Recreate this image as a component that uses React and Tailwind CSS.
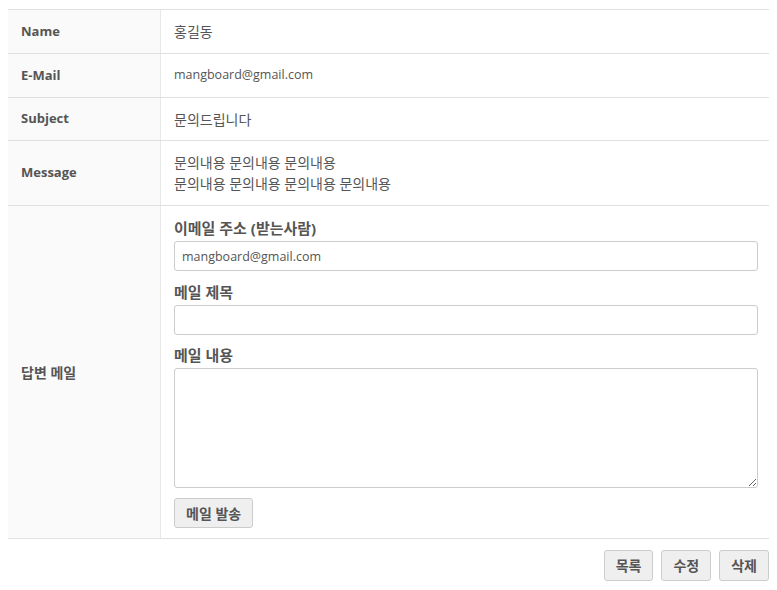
export default function App() {
  const font = { fontFamily: '"Open Sans", "Noto Sans CJK KR", sans-serif' };
  const rows = [
    ['Name', '홍길동', 'h-[44px]', 'text-[14px]'],
    ['E-Mail', 'mangboard@gmail.com', 'h-[44px]', 'text-[12.5px]'],
    ['Subject', '문의드립니다', 'h-[43px]', 'text-[14px]'],
  ];
  return (
    <div className="bg-white px-2 pt-[9px] text-[13px] text-[#555]" style={font}>
      <div className="border-t border-[#e0e0e0]">
        {rows.map(([k, v, h, size]) => (
          <div key={k} className={`flex ${h} border-b border-[#e0e0e0]`}>
            <div className="w-[153px] shrink-0 bg-[#fafafa] border-r border-[#e8e8e8] px-[13px] flex items-center font-bold">{k}</div>
            <div className={`flex-1 px-[13px] flex items-center ${size}`}>{v}</div>
          </div>
        ))}
        <div className="flex h-[65px] border-b border-[#e0e0e0]">
          <div className="w-[153px] shrink-0 bg-[#fafafa] border-r border-[#e8e8e8] px-[13px] flex items-center font-bold">Message</div>
          <div className="flex-1 px-[13px] flex flex-col justify-center leading-[21px] text-[14px]">
            <div>문의내용 문의내용 문의내용</div>
            <div>문의내용 문의내용 문의내용 문의내용</div>
          </div>
        </div>
        <div className="flex border-b border-[#e0e0e0]">
          <div className="w-[153px] shrink-0 bg-[#fafafa] border-r border-[#e8e8e8] px-[13px] flex items-center font-bold text-[14px]">답변 메일</div>
          <div className="flex-1 pl-[13px] pr-[11px] pt-[11px] pb-[10px]">
            <div className="font-bold text-[15px] h-[22px] leading-[22px] mb-[2px] flex items-center">이메일 주소 (받는사람)</div>
            <input
              defaultValue="mangboard@gmail.com"
              className="block w-full h-[30px] border border-[#ccc] rounded-[3px] px-[7px] text-[12.5px] text-[#555] outline-none"
              style={font}
            />
            <div className="font-bold text-[15px] h-[22px] leading-[22px] mt-[10px] mb-[2px] flex items-center">메일 제목</div>
            <input className="block w-full h-[30px] border border-[#ccc] rounded-[3px] px-[7px] outline-none" style={font} />
            <div className="font-bold text-[15px] h-[22px] leading-[22px] mt-[9px] mb-[2px] flex items-center">메일 내용</div>
            <textarea className="block w-full h-[120px] border border-[#ccc] rounded-[3px] px-[7px] outline-none" style={font} />
            <button className="block mt-[10px] h-[30px] px-[11px] border border-[#ccc] rounded-[3px] bg-[#efefef] text-[14px] font-bold text-[#555]" style={font}>메일 발송</button>
          </div>
        </div>
      </div>
      <div className="flex justify-end gap-[8px] mt-[11px]">
        {['목록', '수정', '삭제'].map((t) => (
          <button key={t} className="h-[31px] px-[11px] border border-[#ccc] rounded-[3px] bg-[#efefef] text-[14px] font-bold text-[#555]" style={font}>{t}</button>
        ))}
      </div>
    </div>
  );
}
